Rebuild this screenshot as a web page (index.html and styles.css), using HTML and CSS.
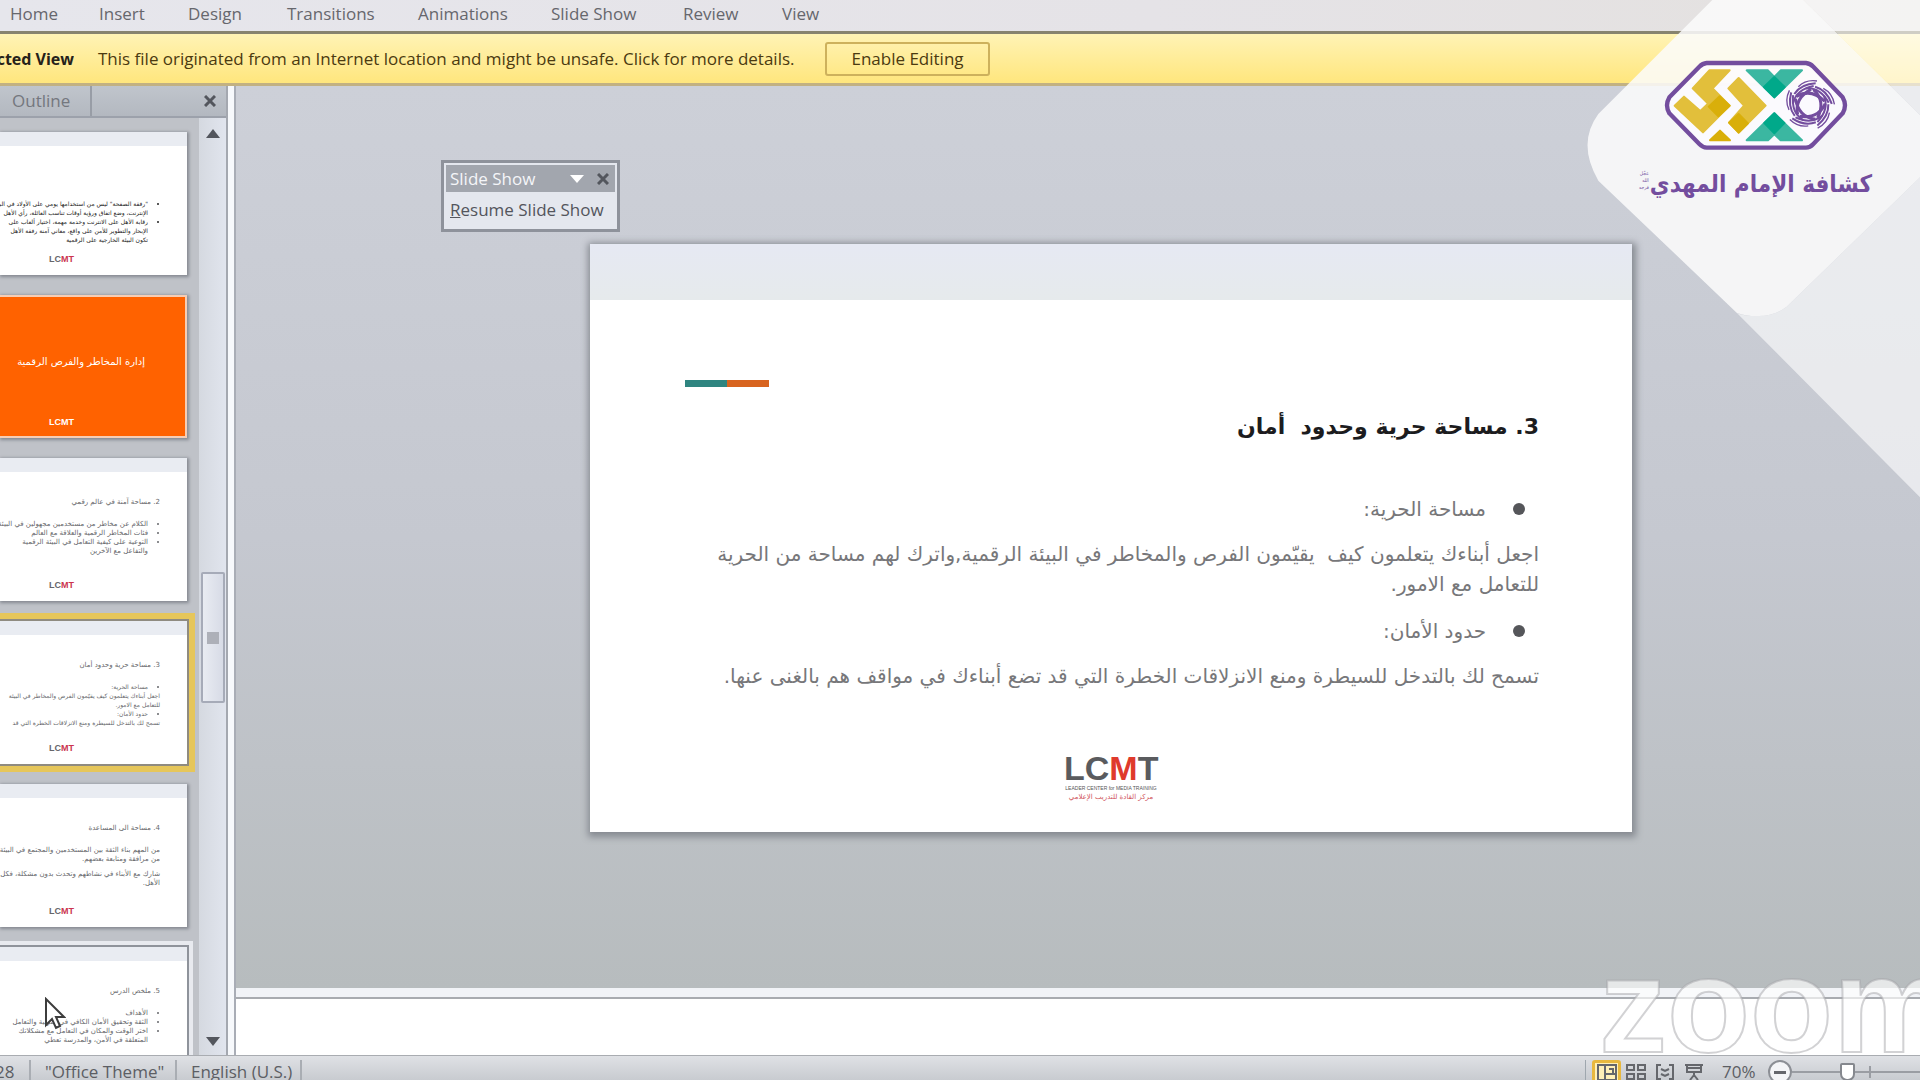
FILE: index.html
```html
<!DOCTYPE html>
<html lang="en">
<head>
<meta charset="utf-8">
<title>Presentation</title>
<link rel="stylesheet" href="styles.css">
</head>
<body>
<div class="app">
  <nav class="ribbon">
    <a href="#" style="--w:89px">Home</a><a href="#" style="--w:89px">Insert</a><a href="#" style="--w:99px">Design</a><a href="#" style="--w:131px">Transitions</a><a href="#" style="--w:133px">Animations</a><a href="#" style="--w:132px">Slide Show</a><a href="#" style="--w:99px">Review</a><a href="#" style="--w:60px">View</a>
  </nav>
  <div class="notice">
    <strong class="notice-title"><span>Protected View</span></strong>
    <span class="notice-text">This file originated from an Internet location and might be unsafe. Click for more details.</span>
    <button class="enable" type="button">Enable Editing</button>
  </div>

  <main class="body">
    <aside class="pane">
      <div class="pane-head">
        <button class="outline" type="button">Outline</button>
        <button class="close" type="button" aria-label="Close pane"><svg width="12" height="12" viewBox="0 0 12 12"><path d="M1 1 11 11M11 1 1 11"/></svg></button>
      </div>
      <div class="pane-body">
        <div class="thumbs">
          <section class="thumb dense" dir="rtl">
            <ul><li>"رفقة الصفحة" ليس من استخدامها يومي على الأولاد في البيت<br>الإنترنت، وضع اتفاق ورؤية أوقات تناسب العائلة، رأي الأهل</li><li>رقابة الأهل على الانترنت وخدمة مهمة، اختيار ألعاب على<br>الإبحار والتطوير للأمن على واقع، معاني آمنة رفقة الأهل<br>تكون البيئة الخارجية على الرقمية</li></ul>
            <b class="mini"><i>LC</i>MT</b>
          </section>
          <section class="thumb orange" dir="rtl">
            <h2>إدارة المخاطر والفرص الرقمية</h2>
            <b class="mini">LCMT</b>
          </section>
          <section class="thumb" dir="rtl">
            <h3>2. مساحة آمنة في عالم رقمي</h3>
            <ul><li>الكلام عن مخاطر من مستخدمين مجهولين في البيئة</li><li>فئات المخاطر الرقمية والعلاقة مع العالم</li><li>التوعية على كيفية التعامل في البيئة الرقمية<br>والتفاعل مع الآخرين</li></ul>
            <b class="mini"><i>LC</i>MT</b>
          </section>
          <section class="thumb selected" dir="rtl">
            <h3>3. مساحة حرية وحدود أمان</h3>
            <ul><li>مساحة الحرية:</li></ul>
            <p>اجعل أبناءك يتعلمون كيف يقيّمون الفرص والمخاطر في البيئة<br>للتعامل مع الامور.</p>
            <ul><li>حدود الأمان:</li></ul>
            <p>تسمح لك بالتدخل للسيطرة ومنع الانزلاقات الخطرة التي قد</p>
            <b class="mini"><i>LC</i>MT</b>
          </section>
          <section class="thumb" dir="rtl">
            <h3>4. مساحة الى المساعدة</h3>
            <p>من المهم بناء الثقة بين المستخدمين والمجتمع في البيئة<br>من مرافقة ومتابعة بعضهم.</p>
            <p>شارك مع الأبناء في نشاطهم وتحدث بدون مشكلة، فكل من<br>الأهل.</p>
            <b class="mini"><i>LC</i>MT</b>
          </section>
          <section class="thumb last" dir="rtl">
            <h3>5. ملخص الدرس</h3>
            <ul><li>الأهداف</li><li>الثقة وتحقيق الأمان الكافي في التربية والتعامل</li><li>اختر الوقت والمكان في التعامل مع مشكلاتك<br>المتعلقة في الأمن، والمدرسة تعطي</li></ul>
          </section>
        </div>
        <div class="scroll">
          <svg width="14" height="9" viewBox="0 0 14 9"><path d="M0 9 7 0 14 9Z"/></svg>
          <div class="track"><div class="handle"><span></span></div></div>
          <svg width="14" height="9" viewBox="0 0 14 9"><path d="M0 0 14 0 7 9Z"/></svg>
        </div>
      </div>
      <svg class="pointer" width="22" height="34" viewBox="0 0 22 34"><path d="M2 2V28L8 22 12 31 16 29 12 20H20Z"/></svg>
    </aside>
    <div class="splitter"></div>

    <div class="work">
      <div class="stage">
        <article class="slide">
          <div class="slide-band"></div>
          <div class="accent"></div>
          <div class="copy" dir="rtl">
            <h1>3. مساحة حرية وحدود&nbsp; أمان</h1>
            <ul><li>مساحة الحرية:</li></ul>
            <p>اجعل أبناءك يتعلمون كيف&nbsp; يقيّمون الفرص والمخاطر في البيئة الرقمية,واترك لهم مساحة من الحرية<br>للتعامل مع الامور.</p>
            <ul><li>حدود الأمان:</li></ul>
            <p>تسمح لك بالتدخل للسيطرة ومنع الانزلاقات الخطرة التي قد تضع أبناءك في مواقف هم بالغنى عنها.</p>
          </div>
          <div class="lcmt">
            <div class="lcmt-name"><span>LC</span><em>M</em><span>T</span></div>
            <div class="lcmt-en">LEADER CENTER for MEDIA TRAINING</div>
            <div class="lcmt-ar" dir="rtl">مركز القادة للتدريب الإعلامي</div>
          </div>
        </article>
        <div class="floating">
          <div class="floating-head"><span>Slide Show</span>
            <svg width="14" height="8" viewBox="0 0 14 8"><path d="M0 0H14L7 8Z"/></svg>
            <button class="close" type="button" aria-label="Close toolbar"><svg width="12" height="12" viewBox="0 0 12 12"><path d="M1 1 11 11M11 1 1 11"/></svg></button>
          </div>
          <button class="resume" type="button"><u>R</u>esume Slide Show</button>
        </div>
      </div>
      <div class="notes"></div>
    </div>
  </main>

  <footer class="status">
    <span class="count">28</span>
    <span class="theme">"Office Theme"</span>
    <span class="lang">English (U.S.)</span>
    <div class="views">
      <button class="on" type="button" aria-label="Normal"><svg width="20" height="18" viewBox="0 0 20 18"><path d="M1 2H19V17H1ZM8 2V17M8 11H19M12 6h4v5"/></svg></button>
      <button type="button" aria-label="Slide Sorter"><svg width="20" height="18" viewBox="0 0 20 18"><path d="M1 2H8V7H1ZM12 2H19V7H12ZM1 11H8V16H1ZM12 11H19V16H12Z"/></svg></button>
      <button type="button" aria-label="Reading View"><svg width="20" height="18" viewBox="0 0 20 18"><path d="M6 2H2V16H6M14 2H18V16H14M6 6 10 8 14 6M6 11 10 13 14 11"/></svg></button>
      <button type="button" aria-label="Slide Show"><svg width="20" height="18" viewBox="0 0 20 18"><path d="M1 2H19M3 3V9H17V3M3 5H17M10 9V13M6 17 10 12 14 17"/></svg></button>
    </div>
    <span class="percent">70%</span>
    <button class="minus" type="button" aria-label="Zoom out"></button>
    <div class="zoom-track"><span class="knob"></span><span class="tick"></span></div>
  </footer>

  <div class="watermark">zoom</div>

  <div class="brand">
    <svg width="360" height="500" viewBox="0 0 1080 1500">
      <g fill="#fff" fill-opacity=".6">
        <path d="M730 0H1080V345Z"/>
        <path d="M1080 532 680 920Q640 950 590 948 550 948 530 938L1080 1492Z"/>
      </g>
      <path fill="#fbfbfb" fill-opacity=".86" d="M457 0H730L1080 345V532L680 920Q640 950 590 948 555 948 530 938L115 542Q50 430 115 342Z"/>
      <path fill="#fcfbff" fill-opacity=".8" stroke="#734d9e" stroke-width="13" stroke-linejoin="round" d="M440 189H738Q750 190 760 200L848 292Q862 316 848 340L760 432Q750 443 738 443H440Q428 442 418 432L328 340Q314 316 328 292L418 200Q428 190 440 189Z"/>
      <g stroke-width="6" stroke-linejoin="round">
        <g fill="#e2bf3b" stroke="#e2bf3b">
          <path d="M448 211H509L458 265 509 317 429 397 344 317 372 290 421 333 444 311 398 265Z"/>
          <path d="M536 234 617 317 536 398 507 368 552 317 505 265Z"/>
        </g>
        <g fill="#d9af0a" stroke="#d9af0a">
          <path d="M479 289 509 317 475 349 446 320Z"/><path d="M536 342 564 370 536 398 507 368Z"/><path d="M450 421 480 392 510 421Z"/>
        </g>
        <g fill="#3bb7a1" stroke="#3bb7a1">
          <path d="M560 211H624L643 231 662 211H726L643 292Z"/><path d="M560 421 643 340 726 421H662L643 403 624 421Z"/>
        </g>
        <g fill="#00a98a" stroke="#00a98a">
          <path d="M643 231 674 261 643 292 612 261Z"/><path d="M643 340 673 369 643 400 613 369Z"/>
        </g>
      </g>
      <defs><g id="petal"><path stroke-width="9" d="M-36 30Q-46-20 4-46"/><path d="M-50-4Q-40-46 12-56"/><path d="M-46-32Q-26-62 18-64"/><path stroke-width="4" d="M-34-54Q-12-76 22-71"/></g></defs>
      <g transform="translate(749 314)" fill="none" stroke="#734d9e" stroke-width="6">
        <use href="#petal"/><use href="#petal" transform="rotate(72)"/><use href="#petal" transform="rotate(144)"/><use href="#petal" transform="rotate(216)"/><use href="#petal" transform="rotate(288)"/>
      </g>
    </svg>
    <div class="brand-name" dir="rtl"><span>كشافة الإمام المهدي</span><small>عجّل<br>الله<br>فرجه</small></div>
  </div>
</div>
</body>
</html>
```
FILE: styles.css
```css
* { box-sizing: border-box; }
body {
  margin: 0;
  font-family: "Open Sans", "Noto Sans", sans-serif;
  font-size: 17px;
  line-height: 24px;
  color: #3c3c40;
}
button { font: inherit; color: inherit; background: none; border: 0; padding: 0; }
h1, h2, h3, p, ul { margin: 0; padding: 0; }
.app {
  position: relative;
  display: grid;
  grid-template-rows: 34px 52px 1fr 25px;
  height: 100vh;
  overflow: hidden;
  white-space: nowrap;
}

.ribbon {
  display: flex;
  padding: 2px 0 0 10px;
  background: linear-gradient(90deg, #e6e6ec, #e5e3e7 60%, #e4e1df);
  border-bottom: 3px solid #87836f;
}
.ribbon a { width: var(--w); color: #66676d; text-decoration: none; }

.notice {
  display: flex;
  align-items: center;
  background: linear-gradient(#fff3b5, #ffe67d);
  border-bottom: 3px solid #c2b182;
  color: #4b3a10;
}
.notice-title {
  display: flex;
  justify-content: flex-end;
  width: 74px;
  margin-right: 24px;
  overflow: hidden;
  font-size: 16px;
  color: #26221a;
}
.notice-text { width: 727px; font-weight: 500; }
.enable {
  width: 165px;
  height: 34px;
  border: 2px solid #cdb15c;
  border-radius: 3px;
  font-weight: 500;
}

.body { display: grid; grid-template-columns: 226px 10px 1fr; min-height: 0; }
.pane { position: relative; display: flex; flex-direction: column; min-height: 0; background: #bfc2c8; }
.pane-head {
  display: flex;
  justify-content: space-between;
  align-items: center;
  height: 32px;
  padding-right: 10px;
  background: linear-gradient(#c0c5cc, #b3b8c0);
  border-bottom: 2px solid #9ca1ab;
}
.outline {
  width: 92px;
  height: 30px;
  padding-left: 12px;
  text-align: left;
  color: #74777e;
  border-right: 2px solid #989da6;
}
.close { display: flex; }
.close path { fill: none; stroke: #53565d; stroke-width: 3; }
.pane-body { display: flex; flex: 1; min-height: 0; }
.thumbs { display: flex; flex-direction: column; gap: 20px; width: 199px; padding-top: 14px; overflow: hidden; }
.thumb {
  position: relative;
  flex: none;
  width: 187px;
  height: 143px;
  padding: 39px 27px 0 0;
  background: linear-gradient(#e9ecf2 14px, #fff 14px);
  box-shadow: 1px 1px 3px 1px #858991;
  font: 7px/9px "DejaVu Sans", sans-serif;
  color: #66676b;
}
.thumb h3 { margin-bottom: 12px; font-size: 7px; line-height: 11px; font-weight: 400; }
.thumb ul { margin-right: 12px; padding: 0; }
.thumb p + p { margin-top: 6px; }
.thumb p { margin-bottom: 1px; }
.dense { padding-top: 67px; font-size: 6px; color: #222; }
.orange { background: #ff6200; border: 2px solid #f6cdb5; border-left: 0; padding: 56px 40px 0 0; color: #fff; }
.orange h2 { font-size: 10px; line-height: 18px; font-weight: 400; }
.selected { box-shadow: 0 0 0 2px #8f8b80, 0 0 0 8px #e6c65a; font-size: 6px; }
.selected ul { margin-top: -1px; }
.last { box-shadow: 0 0 0 2px #8f939b, 0 0 0 6px #e8eaef; }
.mini {
  position: absolute;
  left: 49px;
  bottom: 11px;
  direction: ltr;
  font: 700 9px/9px "Liberation Sans", sans-serif;
  color: #cb3350;
}
.mini i { font-style: normal; color: #66666a; }
.orange .mini { color: #fff; bottom: 9px; }
.scroll {
  display: flex;
  flex-direction: column;
  align-items: center;
  flex: 1;
  padding: 11px 0 9px;
  background: linear-gradient(90deg, #d5d9e0, #e1e5ee);
  fill: #53565d;
}
.track { flex: 1; width: 24px; padding-top: 434px; }
.handle {
  display: flex;
  align-items: center;
  justify-content: center;
  height: 131px;
  background: linear-gradient(90deg, #e9ecf2, #d7dbe6);
  border: 2px solid #a6abb8;
  border-radius: 2px;
}
.handle span { width: 12px; height: 12px; background: #adb0b8; }
.pointer { position: absolute; left: 44px; bottom: 24px; fill: #fff; stroke: #3d3d3d; stroke-width: 2; }
.splitter { background: #f7f9fc; border-left: 2px solid #a4a8b0; border-right: 2px solid #a9adb6; }

.work { display: grid; grid-template-rows: 1fr 67px; min-height: 0; }
.stage { position: relative; padding: 158px 288px 0 354px; background: linear-gradient(#cdd0d8, #c5c8d0 50%, #b7bcbe); }
.notes { background: #fff; border-top: 9px solid #f1f3f7; box-shadow: inset 0 2px #a8abb0, 0 -1px #999da1; }
.slide {
  display: flex;
  flex-direction: column;
  height: 588px;
  background: #fff;
  box-shadow: 1px 2px 7px 3px #868a91;
}
.slide-band { height: 56px; background: linear-gradient(#e6e9f3, #e6eaec); }
.accent { width: 84px; height: 7px; margin: 80px 0 0 95px; background: linear-gradient(90deg, #2f8580 50%, #d8641f 50%); }
.copy {
  padding: 20px 93px 0 0;
  font: 20px/32px "DejaVu Sans", sans-serif;
  color: #77777a;
}
.copy h1 { margin-bottom: 46px; font-size: 22px; line-height: 40px; color: #1c1c1e; }
.copy ul { list-style: none; margin-bottom: 14px; }
.copy li { display: flex; align-items: center; gap: 27px; padding-right: 14px; }
.copy li::before { content: ""; width: 12px; height: 12px; border-radius: 50%; background: #55565a; }
.copy p { margin-bottom: 16px; line-height: 30px; }
.copy p:last-child { margin: 0; }
.lcmt { width: 94px; margin: auto auto 30px 474px; font-family: "Liberation Sans", sans-serif; text-align: center; }
.lcmt-name { font-size: 34px; line-height: 32px; font-weight: 700; color: #5a5b5e; }
.lcmt-name em { font-style: normal; color: #df3a2c; }
.lcmt-en { font-size: 5px; line-height: 8px; color: #555; }
.lcmt-ar { font: 7px/10px "DejaVu Sans", sans-serif; color: #d0555c; }

.floating {
  position: absolute;
  left: 205px;
  top: 74px;
  width: 179px;
  height: 72px;
  padding: 2px;
  border: 3px solid #8e929b;
  background: #e4e7ee;
}
.floating-head { display: flex; align-items: center; gap: 13px; height: 27px; padding: 0 6px 0 4px; background: #a2a6ae; color: #f4f5f8; }
.floating-head span { flex: 1; }
.floating-head > svg { fill: #fff; }
.resume { display: block; padding-left: 4px; height: 36px; color: #53555c; }

.status {
  display: flex;
  align-items: center;
  padding-top: 8px;
  background: linear-gradient(#dfe1e5, #c8cbd0);
  border-top: 1px solid #a9acb1;
  color: #5c5e64;
  overflow: hidden;
}
.count { width: 31px; border-right: 2px solid #a9adb3; text-indent: -5px; }
.theme { width: 146px; padding-left: 14px; border-right: 2px solid #a9adb3; }
.lang { width: 125px; padding-left: 14px; border-right: 2px solid #a9adb3; }
.views { display: flex; margin-left: auto; padding-left: 6px; border-left: 1px solid #9fa7ae; }
.views button { display: flex; width: 29px; height: 24px; align-items: center; justify-content: center; }
.views path { fill: none; stroke: #65676c; stroke-width: 2; }
.views .on { border: 3px solid #e8b83e; background: #fff0b8; border-radius: 3px; }
.percent { width: 46px; margin-left: 14px; }
.minus { display: flex; align-items: center; justify-content: center; width: 24px; height: 24px; border: 2px solid #8c8f95; border-radius: 50%; background: #f4f5f7; }
.minus::before { content: ""; width: 12px; height: 3px; background: #65676c; }
.zoom-track { display: flex; align-items: center; width: 128px; height: 24px; padding-left: 48px; background: linear-gradient(#9a9da3, #9a9da3) 0 50% / 100% 2px no-repeat; }
.knob { width: 15px; height: 18px; border: 2px solid #85888e; background: #fff; border-radius: 2px 2px 7px 7px; }
.tick { width: 2px; height: 12px; margin-left: 14px; background: #9a9da3; }

.watermark {
  position: absolute;
  right: -34px;
  bottom: 25px;
  font: 700 136px/100px "Liberation Sans", sans-serif;
  color: rgba(255, 255, 255, .65);
  -webkit-text-stroke: 2px rgba(165, 165, 170, .5);
}
.brand { position: absolute; top: 0; right: 0; width: 360px; height: 500px; }
.brand svg { display: block; }
.brand-name {
  position: absolute;
  top: 164px;
  right: 48px;
  display: flex;
  align-items: flex-start;
  gap: 1px;
  font: 700 24px/40px "DejaVu Sans Condensed", "DejaVu Sans", sans-serif;
  color: #734d9e;
}
.brand-name small { padding-top: 6px; font-size: 5px; line-height: 7px; font-weight: 400; }
```
